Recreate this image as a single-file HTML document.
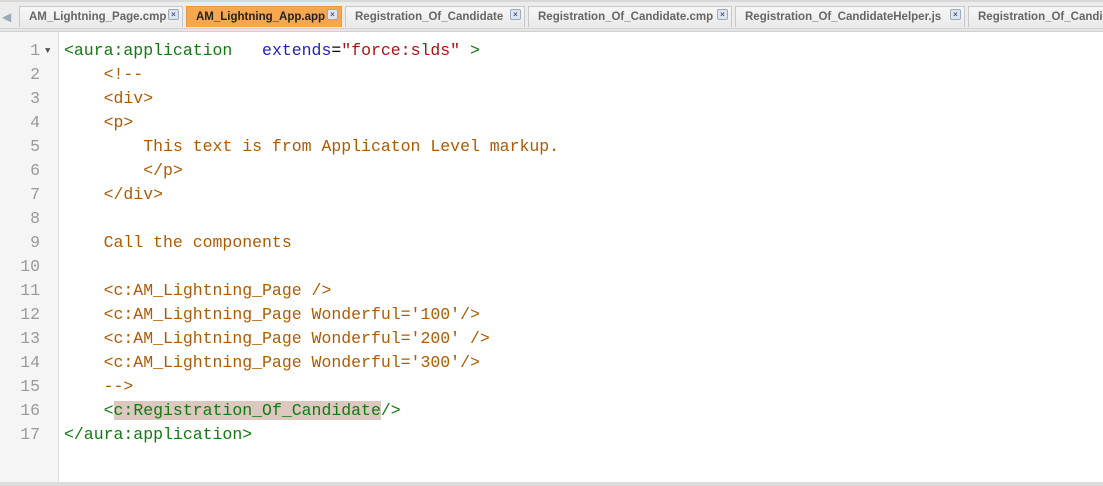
<!DOCTYPE html><html><head><style>
body{margin:0;width:1103px;height:486px;overflow:hidden;background:#fff;font-family:"Liberation Sans",sans-serif;position:relative}
.bar{position:absolute;left:0;top:0;width:1103px;height:28px;background:#ececec;border-top:2px solid #d8d8d8;box-sizing:border-box}
.band{position:absolute;left:0;top:28px;width:1103px;height:4px;background:#e6e6e6;border-top:1px solid #d0d0d0;border-bottom:1px solid #d0d0d0;box-sizing:border-box}
.tab{position:absolute;top:6px;height:21px;background:linear-gradient(#f7f7f7,#e9e9e9);border:1px solid #c8c8c8;border-bottom:none;box-sizing:border-box;font-size:11.5px;font-weight:bold;color:#666;padding:4px 0 0 9px;white-space:nowrap;overflow:hidden}
.tab.a{background:#f7a650;color:#222;border-color:#e89840}
.x{position:absolute;right:3px;top:2px;width:9px;height:9px;border:1px solid #9ab;border-radius:2px;background:#dde6f0;font-size:8px;line-height:9px;text-align:center;color:#557}
.gut{position:absolute;left:0;top:32px;width:58px;height:450px;background:#f5f5f5;border-right:1px solid #ddd}
.code{position:absolute;left:0;top:39px;font-family:"Liberation Mono",monospace;font-size:16.5px;line-height:24px}
.ln{position:absolute;left:0;width:40px;text-align:right;color:#999;font-family:"Liberation Mono",monospace;font-size:16.5px}
.t{position:absolute;left:64px;top:0;white-space:pre}
.g{color:#107a10}.o{color:#b05a00}.b{color:#2020c0}.r{color:#b01010}
.hl{background:#dcc8bf}
.sb{position:absolute;left:0;top:482px;width:1103px;height:4px;background:#ddd}
</style></head><body>
<div class="bar"></div>
<div style="position:absolute;left:2px;top:6px;width:14px;height:21px;color:#9ab;font-size:12px;padding-top:4px;box-sizing:border-box">◀</div>
<div class="tab" style="left:19px;width:164px">AM_Lightning_Page.cmp<span class="x">×</span></div>
<div class="tab a" style="left:186px;width:156px">AM_Lightning_App.app<span class="x">×</span></div>
<div class="tab" style="left:345px;width:180px">Registration_Of_Candidate<span class="x">×</span></div>
<div class="tab" style="left:528px;width:204px">Registration_Of_Candidate.cmp<span class="x">×</span></div>
<div class="tab" style="left:735px;width:230px">Registration_Of_CandidateHelper.js<span class="x">×</span></div>
<div class="tab" style="left:968px;width:140px">Registration_Of_Candidate.css</div>
<div class="band"></div>
<div class="gut"></div>
<div class="code"><div class="ln" style="top:0">1</div><div style="position:absolute;left:45px;top:0;font-size:9px;color:#555">▼</div><div class="ln" style="top:24px">2</div><div class="ln" style="top:48px">3</div><div class="ln" style="top:72px">4</div><div class="ln" style="top:96px">5</div><div class="ln" style="top:120px">6</div><div class="ln" style="top:144px">7</div><div class="ln" style="top:168px">8</div><div class="ln" style="top:192px">9</div><div class="ln" style="top:216px">10</div><div class="ln" style="top:240px">11</div><div class="ln" style="top:264px">12</div><div class="ln" style="top:288px">13</div><div class="ln" style="top:312px">14</div><div class="ln" style="top:336px">15</div><div class="ln" style="top:360px">16</div><div class="ln" style="top:384px">17</div><div class="t"><span class="g">&lt;aura:application</span>   <span class="b">extends</span>=<span class="r">"force:slds"</span> <span class="g">&gt;</span>
<span class="o">    &lt;!--
    &lt;div&gt;
    &lt;p&gt;
        This text is from Applicaton Level markup.
        &lt;/p&gt;
    &lt;/div&gt;

    Call the components

    &lt;c:AM_Lightning_Page /&gt;
    &lt;c:AM_Lightning_Page Wonderful='100'/&gt;
    &lt;c:AM_Lightning_Page Wonderful='200' /&gt;
    &lt;c:AM_Lightning_Page Wonderful='300'/&gt;
    --&gt;</span>
<span class="g">    &lt;<span class="hl">c:Registration_Of_Candidate</span>/&gt;
&lt;/aura:application&gt;</span></div></div>
<div class="sb"></div>
</body></html>
